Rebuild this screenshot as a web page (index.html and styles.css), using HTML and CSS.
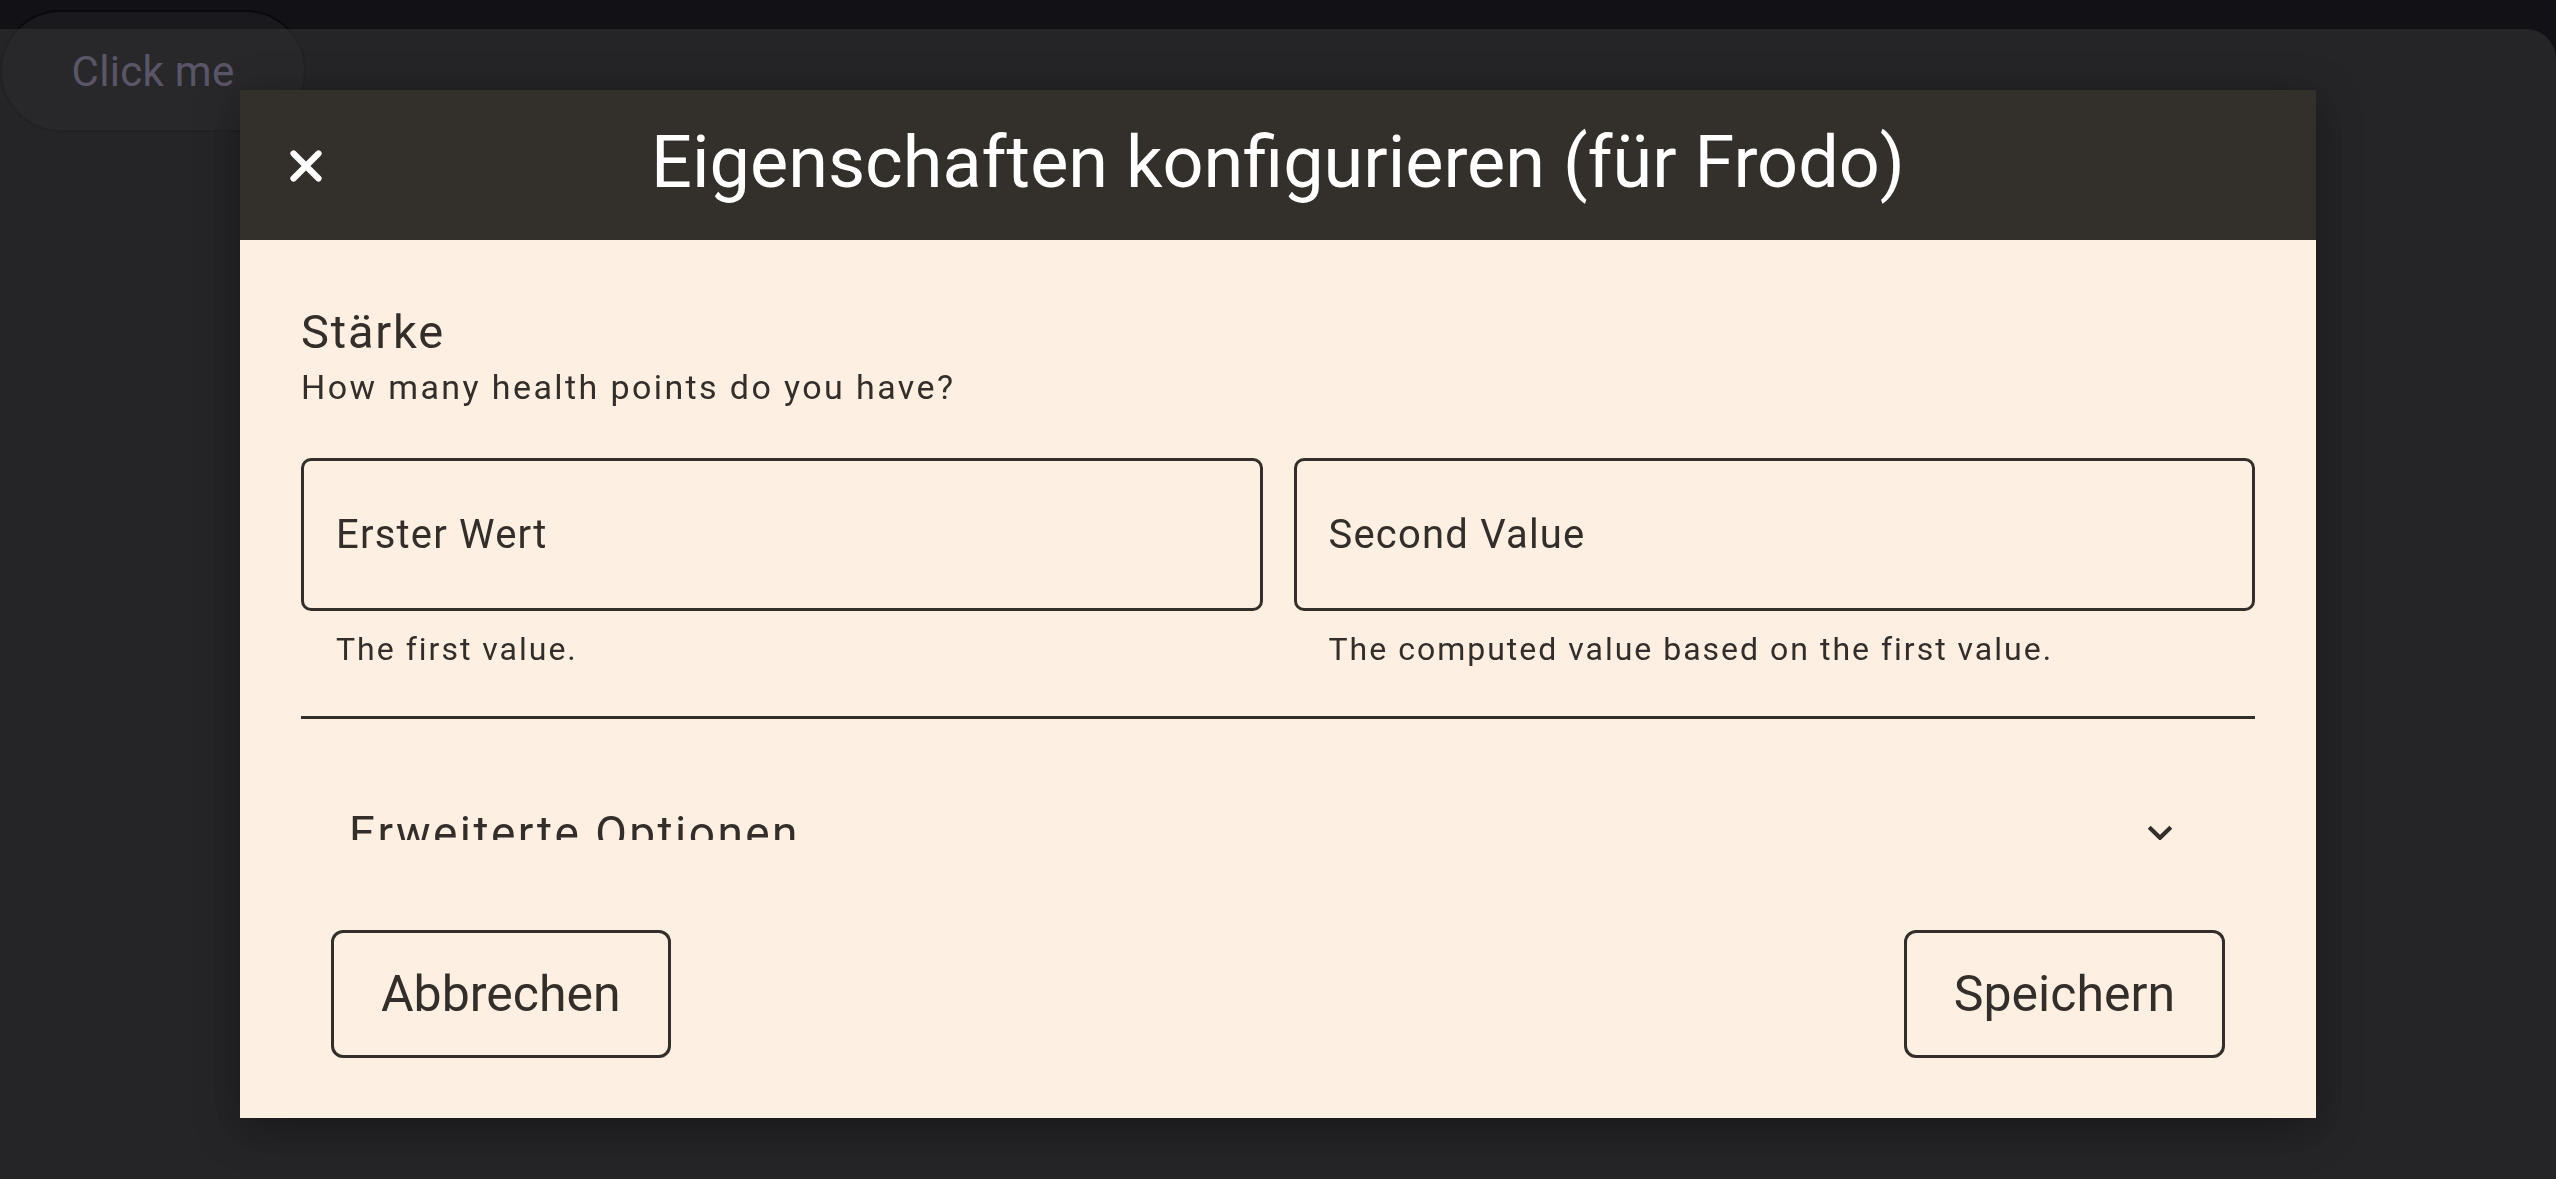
FILE: index.html
```html
<!DOCTYPE html>
<html lang="de">
<head>
<meta charset="utf-8">
<title>Eigenschaften konfigurieren</title>
<link rel="stylesheet" href="styles.css">
</head>
<body>
<button class="trigger" type="button">Click me</button>
<div class="backdrop">
  <section class="dialog" role="dialog" aria-modal="true">
    <header class="dialog-header">
      <button class="close-btn" type="button" aria-label="Schließen">
        <svg width="34" height="34" viewBox="0 0 34 34" aria-hidden="true">
          <path d="M4.5 4.5 L29.5 29.5 M29.5 4.5 L4.5 29.5" fill="none" stroke="#ffffff" stroke-width="6.2" stroke-linecap="round"/>
        </svg>
      </button>
      <h1 class="dialog-title">Eigenschaften konfigurieren (für Frodo)</h1>
      <span class="header-spacer"></span>
    </header>
    <div class="dialog-body">
      <h2 class="group-title">Stärke</h2>
      <p class="group-desc">How many health points do you have?</p>
      <div class="fields">
        <div class="field">
          <div class="field-box"><span class="field-label">Erster Wert</span></div>
          <p class="field-help">The first value.</p>
        </div>
        <div class="field">
          <div class="field-box"><span class="field-label">Second Value</span></div>
          <p class="field-help">The computed value based on the first value.</p>
        </div>
      </div>
      <hr class="divider">
      <div class="accordion-head">
        <span class="accordion-title">Erweiterte Optionen</span>
        <svg class="chevron" width="26" height="16" viewBox="0 0 26 16" aria-hidden="true">
          <path d="M2.2 2.2 L13 12.8 L23.8 2.2" fill="none" stroke="#332e29" stroke-width="4.2"/>
        </svg>
      </div>
    </div>
    <footer class="dialog-footer">
      <button class="btn" type="button">Abbrechen</button>
      <button class="btn" type="button">Speichern</button>
    </footer>
  </section>
</div>
</body>
</html>
```

FILE: styles.css
```css
html, body {
  margin: 0;
  padding: 0;
}

body {
  background: #121116;
  font-family: Roboto, "Noto Sans", "Liberation Sans", sans-serif;
  width: 2556px;
  height: 1179px;
  overflow: hidden;
}

.trigger {
  display: block;
  margin: 10px 0 0 0;
  width: 306px;
  height: 122px;
  border: 2px solid #0b0a0d;
  border-radius: 61px;
  background: #1a191e;
  color: #968cb6;
  font-family: Roboto, "Noto Sans", sans-serif;
  font-size: 42px;
  letter-spacing: 0.3px;
  padding: 0;
}

.backdrop {
  position: fixed;
  top: 29px;
  left: 0;
  right: 0;
  bottom: 0;
  background: rgba(50, 50, 52, 0.6);
  border-top-right-radius: 30px;
  display: flex;
  align-items: center;
  justify-content: center;
}

.dialog {
  width: 2076px;
  height: 1028px;
  background: #fdefe2;
  box-shadow: 0 10px 40px rgba(0, 0, 0, 0.35);
  display: flex;
  flex-direction: column;
  color: #332e29;
}

.dialog-header {
  height: 150px;
  flex: 0 0 150px;
  background: #332f2a;
  display: grid;
  grid-template-columns: 1fr auto 1fr;
  align-items: center;
}

.close-btn {
  justify-self: start;
  margin-left: 49px;
  margin-top: 2px;
  padding: 0;
  border: 0;
  background: none;
  display: flex;
  cursor: pointer;
}

.dialog-title {
  margin: 0 0 6px 0;
  font-size: 72px;
  font-weight: 400;
  color: #ffffff;
  white-space: nowrap;
  line-height: normal;
}

.dialog-body {
  height: 600px;
  flex: 0 0 600px;
  box-sizing: border-box;
  overflow: hidden;
  padding: 64px 61px 0 61px;
}

.group-title {
  margin: 0;
  font-size: 47px;
  line-height: 56px;
  font-weight: 400;
  letter-spacing: 1.8px;
}

.group-desc {
  margin: 7px 0 0 0;
  font-size: 34px;
  line-height: 40px;
  letter-spacing: 2.4px;
}

.fields {
  margin-top: 51px;
  display: grid;
  grid-template-columns: 1fr 1fr;
  column-gap: 31px;
}

.field-box {
  height: 153px;
  box-sizing: border-box;
  border: 3px solid #332e29;
  border-radius: 10px;
  display: flex;
  align-items: center;
  padding-left: 32px;
}

.field-label {
  font-size: 40px;
  letter-spacing: 1.2px;
}

.field-help {
  margin: 19px 0 0 0;
  padding-left: 35px;
  font-size: 32px;
  line-height: 38px;
  letter-spacing: 2px;
}

.divider {
  margin: 48px 0 0 0;
  border: 0;
  height: 3px;
  background: #332e29;
}

.accordion-head {
  margin-top: 64px;
  height: 100px;
  display: flex;
  align-items: center;
  justify-content: space-between;
  padding: 0 82px 0 48px;
}

.accordion-title {
  font-size: 46px;
  letter-spacing: 2.45px;
}

.chevron {
  display: block;
}

.dialog-footer {
  flex: 1 1 auto;
  display: flex;
  justify-content: space-between;
  align-items: flex-start;
  padding: 90px 91px 0 91px;
}

.btn {
  height: 128px;
  box-sizing: border-box;
  border: 3px solid #332e29;
  border-radius: 12px;
  background: transparent;
  color: #332e29;
  font-family: Roboto, "Noto Sans", sans-serif;
  font-size: 50px;
  letter-spacing: 0;
  padding: 0 47px;
  cursor: pointer;
}
```
